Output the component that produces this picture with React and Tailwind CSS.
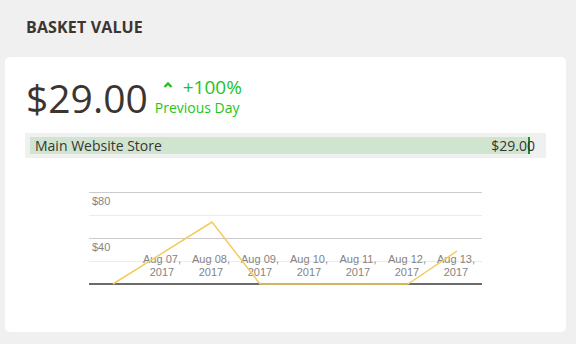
import React from "react";

const dates = ["Aug 07,", "Aug 08,", "Aug 09,", "Aug 10,", "Aug 11,", "Aug 12,", "Aug 13,"];

const Chart = () => (
  <svg width="420" height="110" viewBox="0 0 420 110" className="block ml-[75px] mt-[28px]">
    <line x1="9" x2="402" y1="6.5" y2="6.5" stroke="#cccccc" />
    <line x1="9" x2="402" y1="29.5" y2="29.5" stroke="#ebebeb" />
    <line x1="9" x2="402" y1="52.5" y2="52.5" stroke="#cccccc" />
    <line x1="9" x2="402" y1="75.5" y2="75.5" stroke="#ebebeb" />
    <g fontFamily="'Liberation Sans', Arial, sans-serif" fontSize="11" fill="#848484">
      <text x="12" y="19">$80</text>
      <text x="12" y="65">$40</text>
      {dates.map((d, i) => (
        <g key={d}>
          <text x={82 + i * 49} y="77" textAnchor="middle">{d}</text>
          <text x={82 + i * 49} y="90" textAnchor="middle">2017</text>
        </g>
      ))}
    </g>
    <line x1="9" x2="402" y1="98" y2="98" stroke="#6b6b6b" strokeWidth="2" />
    <polyline
      points="33,98 132,36 180,98 328,98 377,65"
      fill="none"
      stroke="#f5cb5c"
      strokeWidth="1.5"
      strokeLinejoin="round"
    />
  </svg>
);

export default function App() {
  return (
    <div className="h-[344px] w-[576px] bg-[#f0f0f0] overflow-hidden font-['Open_Sans',sans-serif]">
      <h2 className="pl-[26px] pt-[15px] h-[57px] text-[16px] font-bold text-[#3d3530] tracking-[0.15px]">
        BASKET VALUE
      </h2>
      <div className="ml-[5px] w-[561px] h-[275px] bg-white rounded-[5px] pt-[17px]">
        <div className="flex items-start pl-[21px]">
          <span className="text-[39px] leading-[48px] text-[#3b3431]">$29.00</span>
          <div className="ml-[7px] mt-[1px] flex flex-col text-[#1fc41f]">
            <div className="flex items-center">
              <svg width="10" height="8" viewBox="0 0 10 8" className="ml-[8px] mr-[10px] mt-[-4px]">
                <path d="M1.5 6 L5 2.5 L8.5 6" fill="none" stroke="#1fc41f" strokeWidth="2.4" />
              </svg>
              <span className="text-[19px] leading-[24px]">+100%</span>
            </div>
            <span className="text-[14px] leading-[18px]">Previous Day</span>
          </div>
        </div>
        <div className="relative ml-[20px] mt-[11px] w-[521px] h-[25px] bg-[#f0f0f0]">
          <div className="absolute left-[5px] top-[4px] w-[500px] h-[17px] bg-[#cfe5d0] border-r-2 border-[#1a8f1a]" />
          <div className="relative flex justify-between items-center h-full pl-[10px] pr-[11px] text-[14px] text-[#3b3431]">
            <span>Main Website Store</span>
            <span>$29.00</span>
          </div>
        </div>
        <Chart />
      </div>
    </div>
  );
}
